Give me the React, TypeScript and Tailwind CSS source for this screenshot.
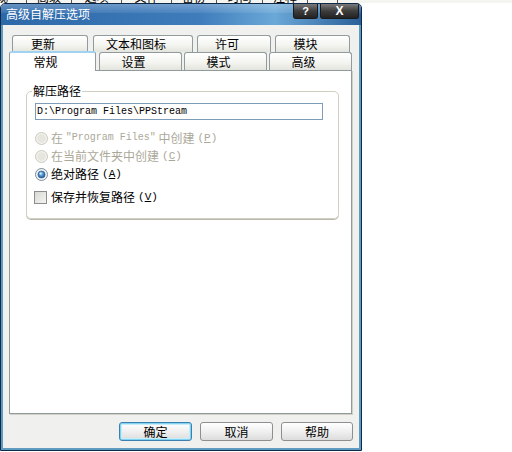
import React from "react";

const tabBase =
  "h-full flex items-center justify-center pr-[14px] rounded-t-[3px] border border-b-0 border-[#919b9c] bg-[linear-gradient(to_bottom,#ffffff,#f3f3ef_60%,#e4e4de)] text-[12px]";

function Strip() {
  const cells: [string, number][] = [
    ["常规", 27],
    ["高级", 45],
    ["选项", 50],
    ["文件", 50],
    ["备份", 45],
    ["时间", 46],
    ["注释", 45],
    ["", 30],
  ];
  return (
    <div className="h-[3px] flex overflow-hidden bg-[#f4f4f0]">
      {cells.map(([t, w], i) => (
        <div
          key={i}
          style={{ width: w }}
          className={`h-full shrink-0 border-r border-[#555] flex justify-center overflow-hidden ${i === 0 ? "justify-start" : ""}`}
        >
          <span className={`text-[12px] leading-[12px] -mt-[9px] ${i === 0 ? "-ml-[16px]" : ""}`}>{t}</span>
        </div>
      ))}
    </div>
  );
}

function Radio({ checked, disabled }: { checked?: boolean; disabled?: boolean }) {
  return (
    <svg width="13" height="13" viewBox="0 0 13 13" className="shrink-0">
      <defs>
        <radialGradient id={checked ? "rc" : "rd"} cx="0.45" cy="0.4" r="0.6">
          <stop offset="0" stopColor={checked ? "#8fd0ff" : "#ffffff"} />
          <stop offset="1" stopColor={checked ? "#1a4f8f" : "#e3e3dc"} />
        </radialGradient>
      </defs>
      <circle cx="6.5" cy="6.5" r="6" fill={disabled ? "#f2f2ee" : "#f4f4f4"} stroke={disabled ? "#c9c9bf" : "#7d8a99"} />
      {disabled && <circle cx="6.5" cy="6.5" r="4.2" fill="#e6e6df" />}
      {checked && <circle cx="6.5" cy="6.5" r="3.6" fill="url(#rc)" stroke="#2a5a8c" strokeWidth="0.6" />}
      {checked && <circle cx="5.6" cy="5.5" r="1.1" fill="#d6efff" />}
    </svg>
  );
}

function Acc({ k }: { k: string }) {
  return (
    <span className="ml-[3px] text-[11px] font-['Liberation_Mono',monospace]">
      (<span className="underline underline-offset-[1px]">{k}</span>)
    </span>
  );
}

function Btn({ label, def }: { label: string; def?: boolean }) {
  return (
    <div
      className={`h-[19px] flex items-center justify-center rounded-[3px] border text-[12px] bg-[linear-gradient(to_bottom,#ffffff,#f0f0f0_50%,#dcdcdc)] ${
        def
          ? "border-[#3c7fb1] shadow-[inset_0_0_0_1px_#7fd3f0,inset_0_0_0_2px_#c8ecf8]"
          : "border-[#8e8f8f]"
      }`}
    >
      {label}
    </div>
  );
}

export default function App() {
  return (
    <div className="w-[512px] h-[452px] bg-white overflow-hidden text-[12px] leading-none text-black font-['Noto_Sans_CJK_SC',sans-serif]">
      <Strip />
      <div className="w-[362px] h-[448px] flex flex-col border border-[#0f2a48] rounded-t-[5px] overflow-hidden">
        {/* Title bar */}
        <div className="h-[21px] shrink-0 flex items-start justify-between bg-[linear-gradient(to_right,#2d68a8,#3e7cbc_55%,#6aa8d8_76%,#2b5f99)] relative">
          <div className="absolute inset-x-0 top-0 h-[9px] bg-[linear-gradient(to_bottom,rgba(255,255,255,0.28),rgba(255,255,255,0.08))]" />
          <span className="relative pl-[5px] pt-[4px] text-white text-[12px]">高级自解压选项</span>
          <div className="relative flex gap-[2px] pr-[2px]">
            <div className="w-[25px] h-[15px] rounded-b-[3px] border border-t-0 border-[#1a1a1a] bg-[linear-gradient(to_bottom,#7a7a7a,#3d3d3d_50%,#222)] flex items-center justify-center text-white font-bold text-[11px] font-['Liberation_Sans',sans-serif]">
              ?
            </div>
            <div className="w-[39px] h-[15px] rounded-b-[3px] border border-t-0 border-[#1a1a1a] bg-[linear-gradient(to_bottom,#7a7a7a,#3d3d3d_50%,#222)] flex items-center justify-center text-white font-bold text-[12px] font-['Liberation_Sans',sans-serif]">
              X
            </div>
          </div>
        </div>
        {/* Body */}
        <div className="flex-1 flex flex-col bg-[#f0f0ee] border-x-2 border-b-2 border-[#5d9cc0] pt-[10px] pl-[6px]">
          <div className="w-[343px]">
            {/* back row */}
            <div className="h-[17px] flex">
              <div className={`${tabBase} ml-[3px] w-[76px]`}>更新</div>
              <div className={`${tabBase} ml-[5px] w-[100px]`}>文本和图标</div>
              <div className={`${tabBase} ml-[4px] w-[74px]`}>许可</div>
              <div className={`${tabBase} ml-[4px] w-[75px]`}>模块</div>
            </div>
            {/* front row */}
            <div className="h-[18px] flex items-end">
              <div className="relative z-10 w-[87px] h-[20px] -mb-[1px] pr-[14px] flex items-center justify-center rounded-t-[3px] border border-b-0 border-[#919b9c] bg-white border-t-2 border-t-[#9fd3ef] text-[12px]">
                常规
              </div>
              <div className={`${tabBase} ml-[3px] w-[83px]`}>设置</div>
              <div className={`${tabBase} ml-[2px] w-[83px]`}>模式</div>
              <div className={`${tabBase} ml-[2px] w-[83px]`}>高级</div>
            </div>
            {/* panel */}
            <div className="h-[344px] bg-white border border-[#919b9c] shadow-[1px_1px_0_#d0d0c8] pt-[20px] pl-[16px]">
              <div className="relative w-[313px] h-[128px] rounded-[5px] border border-[#d0d0bf] shadow-[0_1px_0_#b8b8b0] pl-[8px] pt-[11px]">
                <span className="absolute -top-[8px] left-[5px] bg-white px-[1px] text-[12px] leading-[14px]">解压路径</span>
                <div className="w-[288px] h-[17px] border border-[#7f9db9] flex items-center pl-[1px] text-[10px] font-['Liberation_Mono',monospace]">
                  D:\Program Files\PPStream
                </div>
                <div className="mt-[9px] flex flex-col">
                  <div className="h-[18px] flex items-center gap-[3px] text-[#aca899]">
                    <Radio disabled />
                    <span className="flex items-center">
                      在&nbsp;
                      <span className="text-[10px] font-['Liberation_Mono',monospace]">"Program Files"</span>
                      &nbsp;中创建
                      <Acc k="P" />
                    </span>
                  </div>
                  <div className="h-[18px] flex items-center gap-[3px] text-[#aca899]">
                    <Radio disabled />
                    <span className="flex items-center">
                      在当前文件夹中创建
                      <Acc k="C" />
                    </span>
                  </div>
                  <div className="h-[18px] flex items-center gap-[3px]">
                    <Radio checked />
                    <span className="flex items-center">
                      绝对路径
                      <Acc k="A" />
                    </span>
                  </div>
                  <div className="mt-[5px] h-[18px] flex items-center gap-[4px] -ml-[1px]">
                    <div className="w-[13px] h-[13px] shrink-0 border border-[#8d8d8d] bg-[linear-gradient(135deg,#d8d8d4,#f4f4f2)]" />
                    <span className="flex items-center">
                      保存并恢复路径
                      <Acc k="V" />
                    </span>
                  </div>
                </div>
              </div>
            </div>
          </div>
          {/* buttons */}
          <div className="mt-[8px] flex gap-[8px] pl-[110px]">
            <div className="w-[73px]">
              <Btn label="确定" def />
            </div>
            <div className="w-[73px]">
              <Btn label="取消" />
            </div>
            <div className="w-[72px]">
              <Btn label="帮助" />
            </div>
          </div>
        </div>
      </div>
    </div>
  );
}
